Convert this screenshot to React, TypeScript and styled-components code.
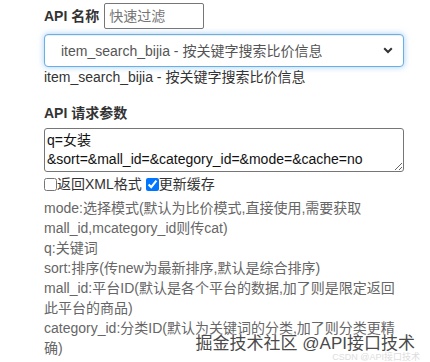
import React from "react";
import styled, { createGlobalStyle } from "styled-components";

const Global = createGlobalStyle`
  html, body { margin: 0; padding: 0; background: #fff; }
  body { font-family: "Liberation Sans", Arial, "Noto Sans CJK SC", sans-serif; font-size: 14px; color: #333; }
  * { box-sizing: border-box; }
`;

const Page = styled.div`
  position: relative;
  width: 430px;
  height: 362px;
  overflow: hidden;
  padding: 3px 0 0 44px;
`;

const Column = styled.div`
  width: 360px;
  display: flex;
  flex-direction: column;
`;

const NameRow = styled.div`
  display: flex;
  align-items: center;
  gap: 5px;
  height: 26px;
`;

const Heading = styled.label<{ $mt?: number }>`
  font-weight: bold;
  font-size: 14px;
  line-height: 20px;
  color: #333;
  margin-top: ${(p) => p.$mt ?? 0}px;
`;

const FilterInput = styled.input`
  width: 100px;
  height: 26px;
  border: 1px solid #767676;
  border-radius: 2px;
  padding: 1px 4px;
  font: 14px "Liberation Sans", Arial, "Noto Sans CJK SC", sans-serif;
  color: #333;
  &::placeholder { color: #757575; }
`;

const SelectWrap = styled.div`
  position: relative;
  margin-top: 5px;
  height: 33px;
`;

const Select = styled.select`
  appearance: none;
  width: 360px;
  height: 33px;
  border: 1px solid #66afe9;
  border-radius: 4px;
  box-shadow: inset 0 1px 1px rgba(0,0,0,.075), 0 0 6px rgba(102,175,233,.6);
  padding: 0 0 0 16px;
  font: 14px "Liberation Sans", Arial, "Noto Sans CJK SC", sans-serif;
  color: #555;
  background: #fff;
  outline: none;
`;

const Chevron = styled.svg`
  position: absolute;
  right: 11px;
  top: 13px;
  width: 10px;
  height: 7px;
  pointer-events: none;
`;

const Line = styled.div<{ $color?: string }>`
  line-height: 20px;
  color: ${(p) => p.$color ?? "#333"};
`;

const ParamArea = styled.textarea`
  margin-top: 5px;
  width: 360px;
  height: 44px;
  border: 1px solid #767676;
  border-radius: 3px;
  padding: 2px 2px;
  font: 14px/19px "Liberation Sans", Arial, "Noto Sans CJK SC", sans-serif;
  color: #111;
  resize: vertical;
  overflow: hidden;
`;

const CheckRow = styled.div`
  display: flex;
  align-items: center;
  height: 20px;
  margin-top: 2px;
  line-height: 20px;
  color: #333;
`;

const Check = styled.input`
  margin: 0;
  width: 13px;
  height: 13px;
`;

const CheckLabel = styled.label<{ $gap?: number }>`
  display: flex;
  align-items: center;
  margin-right: ${(p) => p.$gap ?? 0}px;
`;

const Desc = styled.div`
  margin-top: 4px;
  color: #666;
  line-height: 20px;
  font-size: 14px;
  overflow-wrap: break-word;
`;

const Watermark = styled.div`
  position: absolute;
  right: 15px;
  bottom: 10px;
  font-size: 17px;
  line-height: 17px;
  color: #4a4a4a;
  text-shadow: 0 0 2px #fff, 0 0 2px #fff, 0 0 3px #fff;
  white-space: nowrap;
`;

const FaintMark = styled.div`
  position: absolute;
  right: 10px;
  bottom: 0;
  font-size: 9px;
  line-height: 10px;
  color: #ddd;
  white-space: nowrap;
`;

export default function App() {
  return (
    <Page>
      <Global />
      <Column>
        <NameRow>
          <Heading>API 名称</Heading>
          <FilterInput placeholder="快速过滤" />
        </NameRow>
        <SelectWrap>
          <Select defaultValue="item_search_bijia">
            <option value="item_search_bijia">item_search_bijia - 按关键字搜索比价信息</option>
          </Select>
          <Chevron viewBox="0 0 10 7">
            <path d="M1.2 1.2 L5 5 L8.8 1.2" fill="none" stroke="#333" strokeWidth="2" />
          </Chevron>
        </SelectWrap>
        <Line>item_search_bijia - 按关键字搜索比价信息</Line>
        <Heading $mt={16}>API 请求参数</Heading>
        <ParamArea defaultValue={"q=女装\n&sort=&mall_id=&category_id=&mode=&cache=no"} />
        <CheckRow>
          <CheckLabel $gap={4}>
            <Check type="checkbox" />
            返回XML格式
          </CheckLabel>
          <CheckLabel>
            <Check type="checkbox" defaultChecked />
            更新缓存
          </CheckLabel>
        </CheckRow>
        <Desc>
          mode:选择模式(默认为比价模式,直接使用,需要获取mall_id,mcategory_id则传cat)
          <br />
          q:关键词
          <br />
          sort:排序(传new为最新排序,默认是综合排序)
          <br />
          mall_id:平台ID(默认是各个平台的数据,加了则是限定返回此平台的商品)
          <br />
          category_id:分类ID(默认为关键词的分类,加了则分类更精确)
        </Desc>
      </Column>
      <FaintMark>CSDN @API接口技术</FaintMark>
      <Watermark>掘金技术社区 @API接口技术</Watermark>
    </Page>
  );
}
